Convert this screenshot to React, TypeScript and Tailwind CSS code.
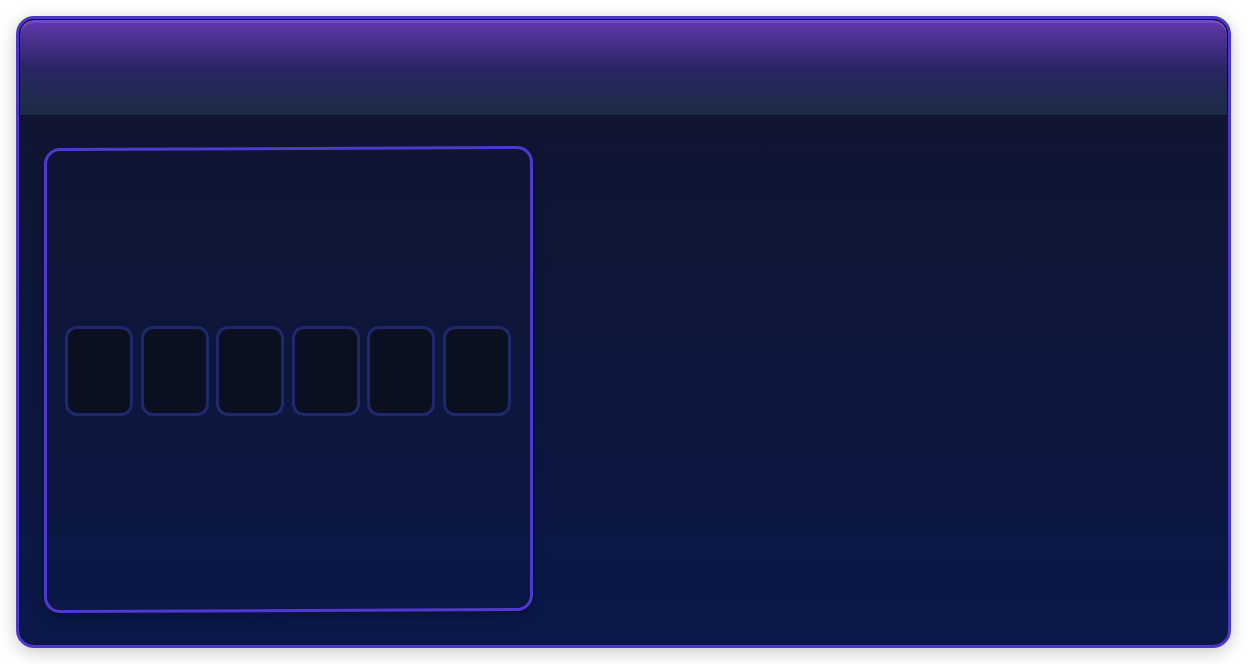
import React from "react";

const slots = [0, 1, 2, 3, 4, 5];

function Slot() {
  return (
    <div className="w-[68px] h-[90px] rounded-[12px] border-[3px] border-[#1f286c] bg-[#0a1020]" />
  );
}

export default function App() {
  return (
    <div className="w-screen h-screen bg-white p-4 font-['Liberation_Sans',sans-serif]">
      <div className="h-full w-full flex flex-col rounded-[18px] border-[3px] border-[#4c36cc] bg-gradient-to-b from-[#10142d] to-[#0a1849] shadow-[0_4px_18px_rgba(0,0,0,0.22)] overflow-hidden">
        <div className="h-[97px] shrink-0 rounded-t-[15px] border border-[#0e0d22] bg-gradient-to-b from-[#6137ad] via-[#2a2566] to-[#1c2c45] shadow-[inset_0_3px_0_rgba(150,120,220,0.35)]" />
        <div className="flex-1 pl-[25px] pt-[31px] pb-[33px]">
          <div className="h-full w-[489px] -skew-y-[0.24deg] rounded-[16px] border-[3px] border-[#5039d0] shadow-[0_4px_12px_rgba(0,0,0,0.25)] flex items-center justify-center pb-[17px] pr-[2px]">
            <div className="flex gap-[7.6px] skew-y-[0.24deg]">
              {slots.map((s) => (
                <Slot key={s} />
              ))}
            </div>
          </div>
        </div>
      </div>
    </div>
  );
}
